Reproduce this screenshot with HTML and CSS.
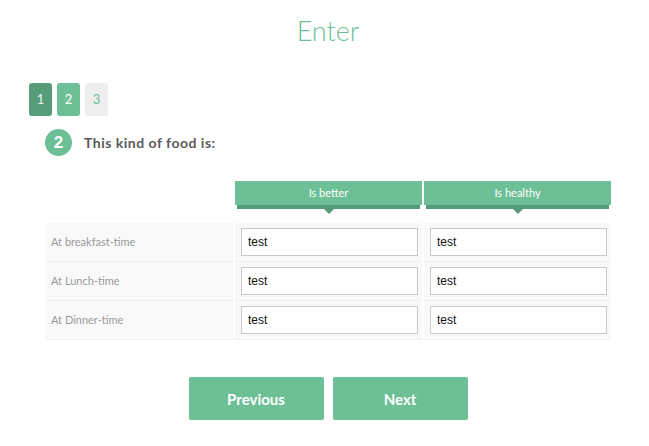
FILE: index.html
```html
<!DOCTYPE html>
<html lang="en">
<head>
  <meta charset="UTF-8" />
  <meta name="viewport" content="width=device-width, initial-scale=1.0" />
  <title>Enter</title>
  <link rel="stylesheet" href="styles.css">
</head>
<body>
  <div class="container">
    <h1 class="title">Enter</h1>

    <div class="steps">
      <span class="step done">1</span>
      <span class="step active">2</span>
      <span class="step todo">3</span>
    </div>

    <div class="question">
      <span class="num">2</span>
      <span class="question-text">This kind of food is:</span>
    </div>

    <div class="grid">
      <div class="corner"></div>
      <div class="head">Is better</div>
      <div class="head">Is healthy</div>

      <div class="cell label">At breakfast-time</div>
      <div class="cell"><input type="text" value="test"></div>
      <div class="cell"><input type="text" value="test"></div>

      <div class="cell label">At Lunch-time</div>
      <div class="cell"><input type="text" value="test"></div>
      <div class="cell"><input type="text" value="test"></div>

      <div class="cell label">At Dinner-time</div>
      <div class="cell"><input type="text" value="test"></div>
      <div class="cell"><input type="text" value="test"></div>
    </div>

    <div class="buttons">
      <button type="button">Previous</button>
      <button type="button">Next</button>
    </div>
  </div>
</body>
</html>
```

FILE: styles.css
```css
html, body {
  margin: 0;
  padding: 0;
  background: #fff;
}

body {
  font-family: 'Lato', 'Open Sans', sans-serif;
  color: #555;
}

.container {
  margin: 0 22px 0 29px;
}

.title {
  margin: 0;
  padding-top: 14px;
  height: 34px;
  line-height: 34px;
  text-align: center;
  font-size: 27px;
  font-weight: 300;
  color: #6dbf95;
}

.steps {
  display: flex;
  gap: 5px;
  margin-top: 35px;
}

.step {
  width: 23px;
  height: 33px;
  line-height: 33px;
  text-align: center;
  border-radius: 3px;
  font-size: 13px;
}

.step.done {
  background: #569c79;
  color: #e8f3ee;
}

.step.active {
  background: #6dbf95;
  color: #fff;
}

.step.todo {
  background: #eeeeee;
  color: #6dbf95;
}

.question {
  display: flex;
  align-items: center;
  gap: 12px;
  margin-top: 13px;
  padding-left: 16px;
}

.num {
  width: 27px;
  height: 27px;
  line-height: 27px;
  border-radius: 50%;
  background: #6dbf95;
  color: #fff;
  text-align: center;
  font-family: 'Liberation Sans Narrow', 'Liberation Sans', sans-serif;
  font-weight: bold;
  font-size: 17px;
}

.question-text {
  font-weight: bold;
  font-size: 14px;
  letter-spacing: 0.5px;
  color: #5a5a5a;
}

.grid {
  display: grid;
  grid-template-columns: 187px 187px 187px;
  column-gap: 2px;
  margin-top: 25px;
  margin-left: 17px;
}

.corner {
  margin-bottom: 18px;
}

.head {
  position: relative;
  height: 24px;
  line-height: 24px;
  margin-bottom: 18px;
  background: #6dbf95;
  color: #fff;
  font-size: 11px;
  text-align: center;
}

.head::before {
  content: "";
  position: absolute;
  left: 2px;
  right: 2px;
  bottom: -4px;
  height: 4px;
  background: #559a78;
}

.head::after {
  content: "";
  position: absolute;
  left: 50%;
  bottom: -9px;
  margin-left: -5px;
  border-left: 5px solid transparent;
  border-right: 5px solid transparent;
  border-top: 5px solid #559a78;
}

.cell {
  height: 39px;
  padding: 5px 4px 0 6px;
  box-sizing: border-box;
  background: #f9f9f9;
  border-bottom: 1px solid #f0f0f0;
}

.label {
  padding: 0 0 0 5px;
  line-height: 38px;
  font-size: 11px;
  color: #999;
}

.cell input {
  width: 100%;
  height: 28px;
  box-sizing: border-box;
  border: 1px solid #c8c8c8;
  padding: 0 6px;
  font-family: 'Liberation Sans', Arial, sans-serif;
  font-size: 12px;
  color: #111;
  background: #fff;
  outline: none;
}

.buttons {
  display: flex;
  justify-content: center;
  gap: 9px;
  margin-top: 37px;
}

.buttons button {
  width: 135px;
  height: 43px;
  border: none;
  border-radius: 2px;
  background: #6dbf95;
  color: #fff;
  font-family: 'Lato', 'Open Sans', sans-serif;
  font-weight: bold;
  font-size: 15px;
  cursor: pointer;
}
```
